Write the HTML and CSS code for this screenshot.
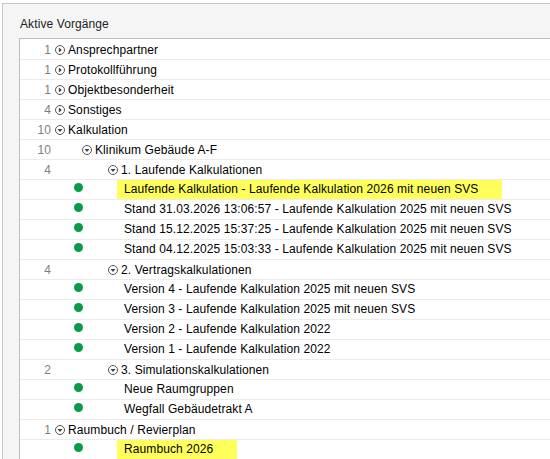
FILE: index.html
```html
<!DOCTYPE html>
<html lang="de">
<head>
    <meta charset="UTF-8">
    <meta name="viewport" content="width=device-width, initial-scale=1.0">
    <title>Aktive Vorgänge</title>
    <link rel="stylesheet" href="styles.css">
</head>
<body>
    <div class="panel">
        <div class="panel-titel">Aktive Vorgänge</div>

        <div class="baum">
            <div class="zeile">
                <span class="anzahl">1</span>
                <span class="knoten ebene-0"><svg class="schalter" viewBox="0 0 10 10"><circle cx="5" cy="5" r="4.5"/><path d="M3.9 2.5 L6.9 5 L3.9 7.5 Z"/></svg>Ansprechpartner</span>
            </div>
            <div class="zeile">
                <span class="anzahl">1</span>
                <span class="knoten ebene-0"><svg class="schalter" viewBox="0 0 10 10"><circle cx="5" cy="5" r="4.5"/><path d="M3.9 2.5 L6.9 5 L3.9 7.5 Z"/></svg>Protokollführung</span>
            </div>
            <div class="zeile">
                <span class="anzahl">1</span>
                <span class="knoten ebene-0"><svg class="schalter" viewBox="0 0 10 10"><circle cx="5" cy="5" r="4.5"/><path d="M3.9 2.5 L6.9 5 L3.9 7.5 Z"/></svg>Objektbesonderheit</span>
            </div>
            <div class="zeile">
                <span class="anzahl">4</span>
                <span class="knoten ebene-0"><svg class="schalter" viewBox="0 0 10 10"><circle cx="5" cy="5" r="4.5"/><path d="M3.9 2.5 L6.9 5 L3.9 7.5 Z"/></svg>Sonstiges</span>
            </div>
            <div class="zeile">
                <span class="anzahl">10</span>
                <span class="knoten ebene-0"><svg class="schalter" viewBox="0 0 10 10"><circle cx="5" cy="5" r="4.5"/><path d="M2.5 3.9 L7.5 3.9 L5 6.9 Z"/></svg>Kalkulation</span>
            </div>
            <div class="zeile">
                <span class="anzahl">10</span>
                <span class="knoten ebene-1"><svg class="schalter" viewBox="0 0 10 10"><circle cx="5" cy="5" r="4.5"/><path d="M2.5 3.9 L7.5 3.9 L5 6.9 Z"/></svg>Klinikum Gebäude A-F</span>
            </div>
            <div class="zeile">
                <span class="anzahl">4</span>
                <span class="knoten ebene-2"><svg class="schalter" viewBox="0 0 10 10"><circle cx="5" cy="5" r="4.5"/><path d="M2.5 3.9 L7.5 3.9 L5 6.9 Z"/></svg>1. Laufende Kalkulationen</span>
            </div>
            <div class="zeile">
                <span class="anzahl"></span>
                <span class="punkt"></span>
                <span class="eintrag markiert">Laufende Kalkulation - Laufende Kalkulation 2026 mit neuen SVS</span>
            </div>
            <div class="zeile">
                <span class="anzahl"></span>
                <span class="punkt"></span>
                <span class="eintrag">Stand 31.03.2026 13:06:57 - Laufende Kalkulation 2025 mit neuen SVS</span>
            </div>
            <div class="zeile">
                <span class="anzahl"></span>
                <span class="punkt"></span>
                <span class="eintrag">Stand 15.12.2025 15:37:25 - Laufende Kalkulation 2025 mit neuen SVS</span>
            </div>
            <div class="zeile">
                <span class="anzahl"></span>
                <span class="punkt"></span>
                <span class="eintrag">Stand 04.12.2025 15:03:33 - Laufende Kalkulation 2025 mit neuen SVS</span>
            </div>
            <div class="zeile">
                <span class="anzahl">4</span>
                <span class="knoten ebene-2"><svg class="schalter" viewBox="0 0 10 10"><circle cx="5" cy="5" r="4.5"/><path d="M2.5 3.9 L7.5 3.9 L5 6.9 Z"/></svg>2. Vertragskalkulationen</span>
            </div>
            <div class="zeile">
                <span class="anzahl"></span>
                <span class="punkt"></span>
                <span class="eintrag">Version 4 - Laufende Kalkulation 2025 mit neuen SVS</span>
            </div>
            <div class="zeile">
                <span class="anzahl"></span>
                <span class="punkt"></span>
                <span class="eintrag">Version 3 - Laufende Kalkulation 2025 mit neuen SVS</span>
            </div>
            <div class="zeile">
                <span class="anzahl"></span>
                <span class="punkt"></span>
                <span class="eintrag">Version 2 - Laufende Kalkulation 2022</span>
            </div>
            <div class="zeile">
                <span class="anzahl"></span>
                <span class="punkt"></span>
                <span class="eintrag">Version 1 - Laufende Kalkulation 2022</span>
            </div>
            <div class="zeile">
                <span class="anzahl">2</span>
                <span class="knoten ebene-2"><svg class="schalter" viewBox="0 0 10 10"><circle cx="5" cy="5" r="4.5"/><path d="M2.5 3.9 L7.5 3.9 L5 6.9 Z"/></svg>3. Simulationskalkulationen</span>
            </div>
            <div class="zeile">
                <span class="anzahl"></span>
                <span class="punkt"></span>
                <span class="eintrag">Neue Raumgruppen</span>
            </div>
            <div class="zeile">
                <span class="anzahl"></span>
                <span class="punkt"></span>
                <span class="eintrag">Wegfall Gebäudetrakt A</span>
            </div>
            <div class="zeile">
                <span class="anzahl">1</span>
                <span class="knoten ebene-0"><svg class="schalter" viewBox="0 0 10 10"><circle cx="5" cy="5" r="4.5"/><path d="M2.5 3.9 L7.5 3.9 L5 6.9 Z"/></svg>Raumbuch / Revierplan</span>
            </div>
            <div class="zeile">
                <span class="anzahl"></span>
                <span class="punkt"></span>
                <span class="eintrag markiert">Raumbuch 2026</span>
            </div>
        </div>
    </div>
</body>
</html>
```

FILE: styles.css
```css
body {
    margin: 0;
    font-family: "Liberation Sans", Arial, sans-serif;
    font-size: 12px;
    letter-spacing: 0.1px;
    color: #000;
    overflow: hidden;
}

.panel {
    margin: 3px 0 0 2px;
    border-top: 1px solid #c8c8c8;
    border-left: 1px solid #c8c8c8;
    background-color: #f5f5f5;
}

.panel-titel {
    padding: 13px 0 0 17px;
    height: 21px;
    line-height: 14px;
    color: #222;
}

.baum {
    margin-left: 16px;
    border-top: 1px solid #bdbdbd;
    border-left: 1px solid #bdbdbd;
    background-color: #fff;
    padding-top: 1px;
    white-space: nowrap;
}

.zeile {
    display: flex;
    align-items: center;
    height: 19px;
    border-bottom: 1px solid #ececec;
}

.anzahl {
    width: 31px;
    flex: none;
    text-align: right;
    color: #808080;
}

.knoten {
    display: flex;
    align-items: center;
}

.ebene-0 {
    padding-left: 4px;
}

.ebene-1 {
    padding-left: 31px;
}

.ebene-2 {
    padding-left: 57px;
}

.schalter {
    width: 10px;
    height: 10px;
    margin-right: 3px;
}

.schalter circle {
    fill: #fff;
    stroke: #555;
    stroke-width: 1;
}

.schalter path {
    fill: #444;
}

.punkt {
    flex: none;
    width: 9px;
    height: 9px;
    margin: 0 34px 4px 23px;
    border-radius: 50%;
    background-color: #0a9b48;
}

.eintrag {
    padding: 0 24px 0 7px;
    line-height: 19px;
}

.markiert {
    background-color: #ffff5c;
}
```
